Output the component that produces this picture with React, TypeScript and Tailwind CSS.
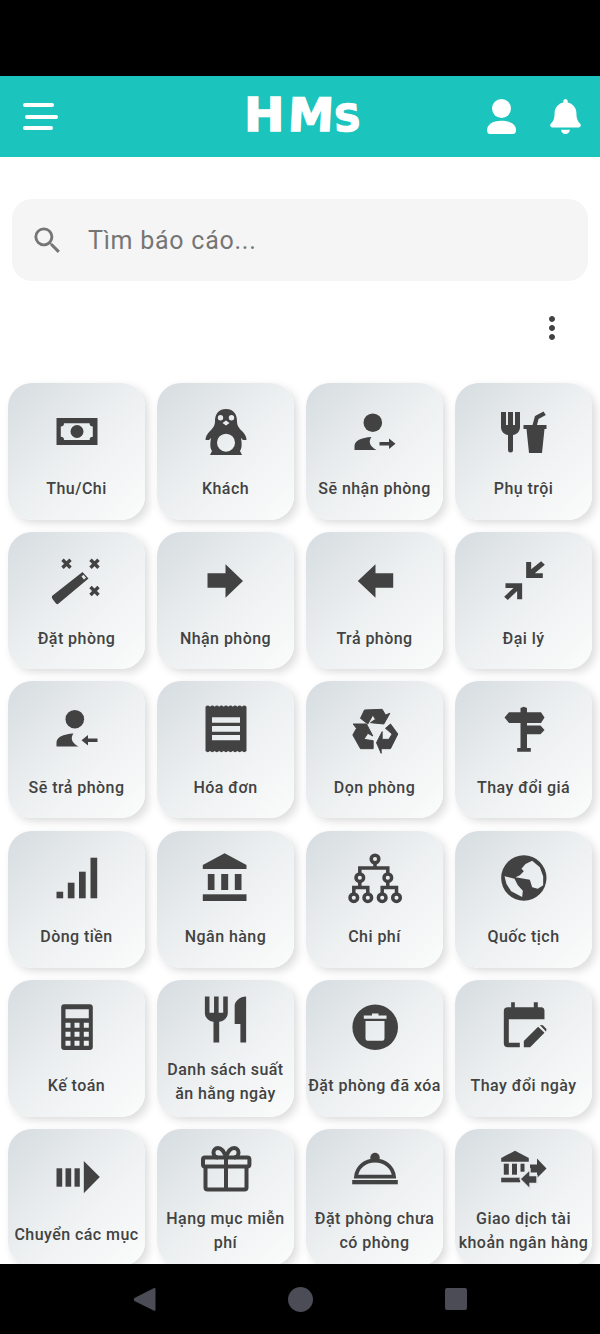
import type { ReactNode } from "react";
import { FaBell } from "react-icons/fa";
import { MdMoreVert, MdRestaurant, MdSearch } from "react-icons/md";

// icons are drawn on a 56x50 canvas, centred in the card's icon slot
function Box({ children }: { children: ReactNode }) {
  return (
    <svg width="56" height="50" viewBox="0 0 56 50" fill="currentColor" fillRule="evenodd" className="overflow-visible">
      {children}
    </svg>
  );
}

function PersonArrow({ out, dy }: { out: boolean; dy: number }) {
  return (
    <Box>
      <g transform={`translate(0 ${dy})`}>
        <circle cx="25.8" cy="16.7" r="9.3" />
        <path d="M7.5 44V40C7.5 35 14 31.5 24.5 31C21.5 35 22 40 29.5 44Z" />
        {out ? (
          <path d="M32.5 36H42V32.5L48.5 37.7L42 43V39.5H32.5Z" />
        ) : (
          <path d="M48.5 36H39V32.5L32.5 37.7L39 43V39.5H48.5Z" />
        )}
      </g>
    </Box>
  );
}

function Sparkle({ x, y }: { x: number; y: number }) {
  return (
    <path
      d={`M${x - 4} ${y - 4}L${x + 4} ${y + 4}M${x + 4} ${y - 4}L${x - 4} ${y + 4}`}
      stroke="currentColor"
      strokeWidth="3.4"
      fill="none"
    />
  );
}

const teeth = Array.from({ length: 9 }, (_, i) => i);
const toothWidth = 41 / 9;
const receiptTop = teeth.map((i) => `Q${7.5 + i * toothWidth + toothWidth / 2} 0.4 ${7.5 + (i + 1) * toothWidth} 2.7`).join(" ");
const receiptBottom = teeth.map((i) => `Q${48.5 - i * toothWidth - toothWidth / 2} 49.3 ${48.5 - (i + 1) * toothWidth} 47`).join(" ");

const calcButtons = [16.5, 25.5, 34.8].flatMap((x) =>
  [20.7, 29.7, 38.7].map((y) => `M${x} ${y}h5v5h-5z`),
).join("");

const sitemapNodes: [number, number][] = [
  [28, 6],
  [12.8, 24.7],
  [40.8, 24.7],
  [6.8, 44.7],
  [20.8, 44.7],
  [35.2, 44.7],
  [49.5, 44.7],
];

const items: { label: string; icon: ReactNode }[] = [
  {
    label: "Thu/Chi",
    icon: (
      <Box>
        <path d="M7.5 12H48.5V39H7.5ZM15 17.3Q15 20.5 11.8 20.5V30.8Q15 30.8 15 34H40.6Q40.6 30.8 43.8 30.8V20.5Q40.6 20.5 40.6 17.3ZM28 19A6.5 6.5 0 1 0 28 32A6.5 6.5 0 1 0 28 19Z" />
      </Box>
    ),
  },
  {
    label: "Khách",
    icon: (
      <Box>
        <path d="M28 3C20 3 17 9 17 15C17 20 15 22 12 25C9 28 7.5 31 7.5 34H11C12 33 12 33 13 32C12 38 12 42 14 45L12 49H44L42 45C44 42 44 38 43 32C44 33 44 33 45 34H48.5C48.5 31 47 28 44 25C41 22 39 20 39 15C39 9 36 3 28 3ZM28 27.7A9 9 0 1 0 28 45.7A9 9 0 1 0 28 27.7ZM22.5 9A2.7 2.7 0 1 0 22.5 14.4A2.7 2.7 0 1 0 22.5 9ZM33.5 9A2.7 2.7 0 1 0 33.5 14.4A2.7 2.7 0 1 0 33.5 9ZM28 14.5L24.5 17L28 19.5L31.5 17Z" />
      </Box>
    ),
  },
  { label: "Sẽ nhận phòng", icon: <PersonArrow out dy={0} /> },
  {
    label: "Phụ trội",
    icon: (
      <Box>
        <path d="M5 6H10V19H12V6H17V19H19V6H24V21C24 26 20.5 28.5 17 29V44A2.5 2.5 0 0 1 12 44V29C8.5 28.5 5 26 5 21Z" />
        <path d="M27.5 19H36.5L39 10L47.5 5.5L49.8 9L42.5 13L41 19H50.5V23H48.5L46 47H33L30.5 23H27.5Z" />
      </Box>
    ),
  },
  {
    label: "Đặt phòng",
    icon: (
      <Box>
        <Sparkle x={17.5} y={8.7} />
        <Sparkle x={45.5} y={8.7} />
        <Sparkle x={45.5} y={36} />
        <path d="M3 41L33.5 17L39.5 23.5L9 49Q8 49.5 7 48.5L3.5 44Q2.5 42.5 3 41ZM32.5 21.5L35 24.5L37 22.8L34.5 19.8Z" />
      </Box>
    ),
  },
  {
    label: "Nhận phòng",
    icon: (
      <Box>
        <polygon points="9.5,18.3 27.5,18.3 27.5,9.3 45,26 27.5,42.7 27.5,32.7 9.5,32.7" />
      </Box>
    ),
  },
  {
    label: "Trả phòng",
    icon: (
      <Box>
        <polygon points="46.2,18.3 28.5,18.3 28.5,9.3 10.8,26 28.5,42.7 28.5,32.7 46.2,32.7" />
      </Box>
    ),
  },
  {
    label: "Đại lý",
    icon: (
      <Box>
        <g transform="translate(-195.5 -179) scale(0.3333)">
          <path d="M677 558L692 558L692 580L722 556L733 566L703 592L727 592L727 606L677 606Z" />
          <path d="M665 670L650 670L650 645L622 672L611 662L639 636L615 636L615 622L665 622Z" />
        </g>
      </Box>
    ),
  },
  { label: "Sẽ trả phòng", icon: <PersonArrow out={false} dy={-1.5} /> },
  {
    label: "Hóa đơn",
    icon: (
      <Box>
        <path
          d={`M7.5 2.7 ${receiptTop} V47 ${receiptBottom} Z M14 13.3V18.7H42V13.3Z M14 22V27.7H42V22Z M14 31V36.3H42V31Z`}
        />
      </Box>
    ),
  },
  {
    label: "Dọn phòng",
    icon: (
      <Box>
        <g transform="translate(-6.5 -4) scale(0.3333)" stroke="currentColor" strokeWidth="3" strokeLinejoin="round">
          <polygon points="60,55 72,30 125,28 135,45 148,40 130,72 90,68 105,58 97,45 82,72" />
          <polygon points="38,72 78,72 97,108 82,100 70,118 98,122 98,146 60,146 37,105 48,85" />
          <polygon points="135,85 150,72 172,102 150,146 122,146 122,160 108,128 125,95 125,118 145,118 155,102" />
        </g>
      </Box>
    ),
  },
  {
    label: "Thay đổi giá",
    icon: (
      <Box>
        <path d="M24.5 4L27.7 2.7L31 4V44H34.8V47.7H21.2V44H24.5Z" />
        <path d="M13 8.3H45L48.5 13.5L45 19H13L8.5 13.5Z" />
        <path d="M30 21.5H44.5L48.5 25.9L44.5 30.3H30Z" />
      </Box>
    ),
  },
  {
    label: "Dòng tiền",
    icon: (
      <Box>
        <rect x="7.5" y="38.7" width="6.7" height="6.6" />
        <rect x="18.8" y="29.7" width="6.7" height="15.6" />
        <rect x="30" y="18.7" width="6.7" height="26.6" />
        <rect x="41.5" y="4.7" width="6.7" height="40.6" />
      </Box>
    ),
  },
  {
    label: "Ngân hàng",
    icon: (
      <Box>
        <path d="M26.6 0.3L48.5 12V16H4.8V12Z" />
        <rect x="9.8" y="21" width="6.7" height="16" />
        <rect x="23.2" y="21" width="7" height="16" />
        <rect x="36.8" y="21" width="6.7" height="16" />
        <rect x="4.8" y="41.3" width="43.7" height="6.7" />
      </Box>
    ),
  },
  {
    label: "Chi phí",
    icon: (
      <Box>
        <g fill="none" stroke="currentColor" strokeWidth="3.5">
          <path d="M28 10V15M12.8 20V15H40.8V20M6.8 40V34.5H20.8V40M35.2 40V34.5H49.5V40M12.8 29V34.5M40.8 29V34.5" />
          {sitemapNodes.map(([x, y]) => (
            <circle key={`${x}-${y}`} cx={x} cy={y} r="3.8" />
          ))}
        </g>
      </Box>
    ),
  },
  {
    label: "Quốc tịch",
    icon: (
      <Box>
        <g transform="translate(-5.5 -5) scale(0.3333)">
          <path d="M100 22A68 68 0 1 0 100 158A68 68 0 1 0 100 22ZM125 38L105 48L93 62L100 70L88 82L75 88L118 95L125 118L142 122L158 112L158 85L148 58ZM42 85L48 108L62 130L95 147L97 128L82 112L72 92L55 88Z" />
        </g>
      </Box>
    ),
  },
  {
    label: "Kế toán",
    icon: (
      <Box>
        <path d={`M15.2 2.3H40.8A3 3 0 0 1 43.8 5.3V45A3 3 0 0 1 40.8 48H15.2A3 3 0 0 1 12.2 45V5.3A3 3 0 0 1 15.2 2.3ZM16.5 7.3V16.3H39.8V7.3Z${calcButtons}`} />
      </Box>
    ),
  },
  { label: "Danh sách suất ăn hằng ngày", icon: <MdRestaurant size={55} /> },
  {
    label: "Đặt phòng đã xóa",
    icon: (
      <Box>
        <path d="M28.2 2.5A22.8 22.8 0 1 0 28.2 48.1A22.8 22.8 0 1 0 28.2 2.5ZM25 11.5V13.5H16.8V16.8H39.5V13.5H31.5V11.5ZM18.5 19V36.5Q18.5 38.7 20.7 38.7H35.3Q37.5 38.7 37.5 36.5V19Z" />
      </Box>
    ),
  },
  {
    label: "Thay đổi ngày",
    icon: (
      <Box>
        <g transform="translate(-195.5 -27) scale(0.3333)">
          <path d="M632 82H643V97H700V82H712V97H722Q732 97 732 108V133H625V203H658V217H622Q610 217 610 205V108Q610 97 622 97H632Z" />
          <path d="M670 217V198L713 155L732 173L689 217Z" />
          <path d="M718 150L727 151L738 162L737 168L737 170Z" />
        </g>
      </Box>
    ),
  },
  {
    label: "Chuyển các mục",
    icon: (
      <Box>
        <rect x="7.5" y="16.3" width="5.7" height="18.4" />
        <rect x="16.5" y="16.3" width="5.7" height="18.4" />
        <rect x="25.5" y="16.3" width="5.3" height="18.4" />
        <polygon points="34.8,9 50.8,25 34.8,41.3" />
      </Box>
    ),
  },
  {
    label: "Hạng mục miễn phí",
    icon: (
      <Box>
        <g fill="none" stroke="currentColor" strokeWidth="4" strokeLinejoin="round">
          <rect x="5" y="13.5" width="46.4" height="9" rx="2" />
          <path d="M7.5 22.5V43.5Q7.5 45.5 9.5 45.5H46.5Q48.5 45.5 48.5 43.5V22.5M28 13.5V45.5" />
          <path d="M28 13.5C26 7 23 4 20 4C17 4 15.5 6.5 15.5 8.5C15.5 11 17 13.5 20 13.5M28 13.5C30 7 33 4 36 4C39 4 40.5 6.5 40.5 8.5C40.5 11 39 13.5 36 13.5" />
        </g>
      </Box>
    ),
  },
  {
    label: "Đặt phòng chưa có phòng",
    icon: (
      <Box>
        <circle cx="28" cy="13.5" r="4.7" />
        <rect x="5.2" y="36" width="45.6" height="4.3" />
        <path d="M9 32.7C10 23 18 16.5 28 16.5C38 16.5 46 23 47 32.7Z" fill="none" stroke="currentColor" strokeWidth="3.8" />
      </Box>
    ),
  },
  {
    label: "Giao dịch tài khoản ngân hàng",
    icon: (
      <Box>
        <path d="M19 6.7L32.8 14V17.7H5.2V14Z" />
        <rect x="7.8" y="19.7" width="5" height="11" />
        <rect x="16" y="19.7" width="5" height="11" />
        <rect x="24.5" y="19.7" width="4" height="8" />
        <rect x="5.2" y="33.7" width="19" height="4.6" />
        <path d="M34 20.5H41V14.5L50.5 24.5L41 34V28.5H34Z" />
        <path d="M41 31.5H34V25.5L24 35L34 45V39.5H41Z" stroke="#e4e7ea" strokeWidth="1.4" />
      </Box>
    ),
  },
];

function Card({ label, icon }: { label: string; icon: ReactNode }) {
  return (
    <div className="h-[137px] rounded-[24px] bg-gradient-to-br from-[#d6dce0] via-[#edf0f1] via-50% to-[#fbfcfc] shadow-[4px_4px_10px_rgba(0,0,0,0.14),-4px_-4px_10px_rgba(255,255,255,0.9)] flex flex-col items-center justify-evenly pt-[1px] px-[2px] text-[#424242]">
      <div className="h-[56px] flex items-center justify-center">{icon}</div>
      <div className="text-[16px] leading-[24px] font-medium text-center tracking-[0.45px]">{label}</div>
    </div>
  );
}

export default function App() {
  return (
    <div className="h-[1334px] w-[600px] flex flex-col overflow-hidden bg-white font-['Roboto','Noto_Sans',sans-serif]">
      <div className="h-[76px] shrink-0 bg-black" />

      <header className="h-[81px] shrink-0 bg-[#1bc4bd] flex items-center text-white">
        <div className="flex-1 pl-[23px]">
          <div className="w-[35px] flex flex-col gap-[7.5px]">
            <div className="h-[4px] w-[31px] rounded-full bg-white" />
            <div className="h-[4px] w-[33px] ml-[2px] rounded-full bg-white" />
            <div className="h-[4px] w-[30px] rounded-full bg-white" />
          </div>
        </div>
        <div className="flex items-baseline font-bold font-['DejaVu_Sans',sans-serif] leading-[50px] [-webkit-text-stroke:1.5px_white]">
          <span className="text-[46px] scale-x-105">H</span>
          <span className="text-[46px] ml-[5px] -skew-x-3">M</span>
          <span className="text-[37px] -rotate-3">S</span>
        </div>
        <div className="flex-1 flex items-center justify-end gap-[32px] pr-[17.5px]">
          <svg width="29" height="35" viewBox="0 0 29 35" fill="currentColor">
            <circle cx="14.5" cy="9.5" r="9.5" />
            <path d="M0 31C0 26 5 21.7 14.5 21.7C24 21.7 29 26 29 31C29 33.5 28 35 26 35H3C1 35 0 33.5 0 31Z" />
          </svg>
          <FaBell size={35} />
        </div>
      </header>

      <main className="flex-1 overflow-hidden">
        <div className="mx-3 mt-[42px] h-[82px] rounded-[20px] bg-[#f5f5f5] flex items-center pl-[18px]">
          <MdSearch size={35} className="text-[#757575]" />
          <span className="ml-[23px] mt-[2px] text-[25px] leading-[30px] tracking-[0.75px] text-[#757575]">Tìm báo cáo...</span>
        </div>

        <div className="flex justify-end mt-[29px] pr-[30px]">
          <MdMoreVert size={36} className="text-[#424242]" />
        </div>

        <div className="grid grid-cols-4 gap-x-3 gap-y-[12.2px] px-2 mt-[37px]">
          {items.map((item) => (
            <Card key={item.label} label={item.label} icon={item.icon} />
          ))}
        </div>
      </main>

      <nav className="h-[70px] shrink-0 bg-black flex items-center justify-center gap-[132px] text-[#4b4c55]">
        <svg width="23" height="25" viewBox="0 0 24 25" fill="currentColor">
          <path d="M22 0.5Q23.5 0.5 23.5 2V23Q23.5 24.5 22 24.3L1.5 14Q0 12.5 1.5 11Z" />
        </svg>
        <div className="w-[25px] h-[25px] rounded-full bg-[#4b4c55]" />
        <div className="w-[22px] h-[22px] rounded-[2px] bg-[#4b4c55]" />
      </nav>
    </div>
  );
}
